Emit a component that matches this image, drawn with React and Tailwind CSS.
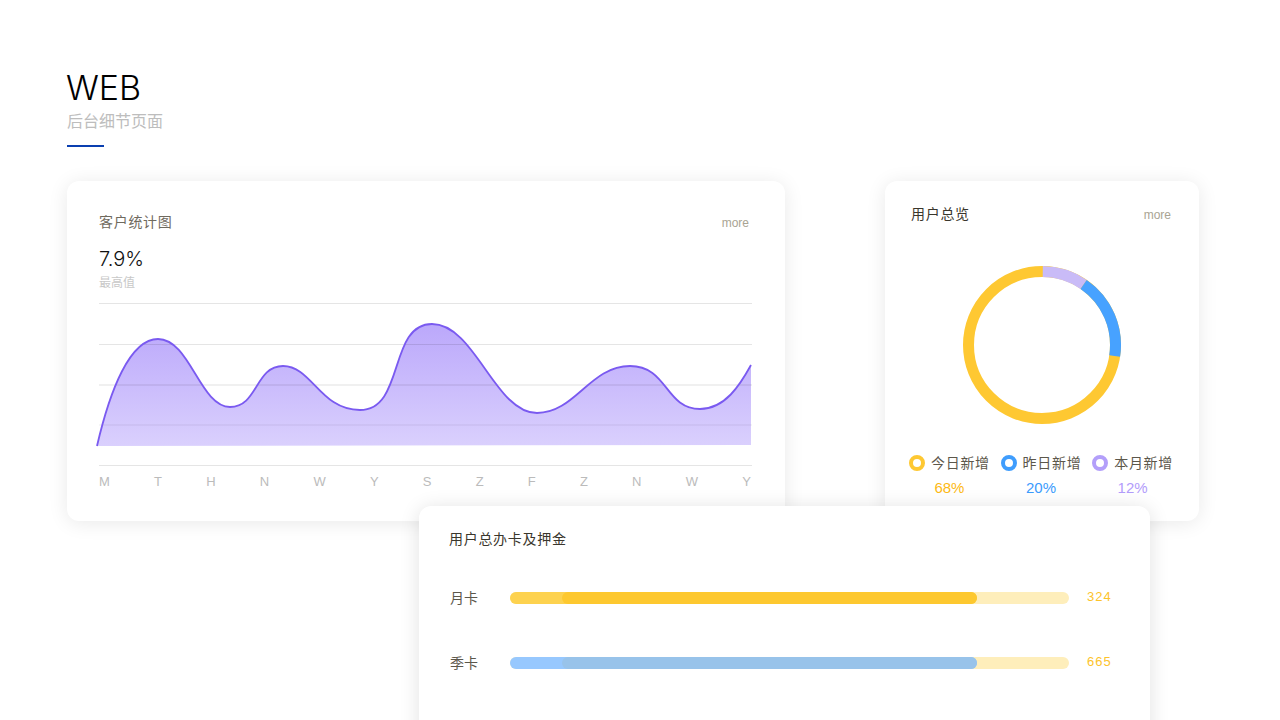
import React from 'react';

const CJK = "font-['Liberation_Sans','Noto_Sans_CJK_SC',sans-serif]";

const curve =
  'M97 446 C110 390 130 339 158 339 C190 339 200 407 230 407 C258 407 255 366 283 366 C312 366 320 410 360 410 C405 410 388 324 432 324 C475 324 495 413 537 413 C575 413 590 366 630 366 C668 366 665 409 700 409 C725 409 740 385 751 365';

const axis = ['M', 'T', 'H', 'N', 'W', 'Y', 'S', 'Z', 'F', 'Z', 'N', 'W', 'Y'];

const legend = [
  { name: '今日新增', value: '68%', dot: 'border-[#fec832]', text: 'text-[#fdb913]' },
  { name: '昨日新增', value: '20%', dot: 'border-[#3f9dfd]', text: 'text-[#3b9bfd]' },
  { name: '本月新增', value: '12%', dot: 'border-[#b39ffa]', text: 'text-[#b29cfb]' },
];

const bars = [
  { name: '月卡', value: '324', light: 'bg-[#fdd24f]', dark: 'bg-[#fdc82f]' },
  { name: '季卡', value: '665', light: 'bg-[#97c8fe]', dark: 'bg-[#98c3ea]' },
];

function arc(r, from, to) {
  const p = (a) => {
    const t = ((a - 90) * Math.PI) / 180;
    return `${80 + r * Math.cos(t)} ${80 + r * Math.sin(t)}`;
  };
  const large = to - from > 180 ? 1 : 0;
  return `M${p(from)} A${r} ${r} 0 ${large} 1 ${p(to)}`;
}

const LineChart = () => (
  <svg viewBox="99 303 653 163" className="block w-[653px] h-[163px] overflow-visible mt-3">
    <defs>
      <linearGradient id="area" x1="0" y1="0" x2="0" y2="1">
        <stop offset="0%" stopColor="#bba8fb" />
        <stop offset="100%" stopColor="#dad0fd" />
      </linearGradient>
    </defs>
    <path d={`${curve} L751 445 L97 446 Z`} fill="url(#area)" />
    <g stroke="#000" strokeOpacity="0.1">
      <line x1="99" x2="752" y1="303.5" y2="303.5" />
      <line x1="99" x2="752" y1="344.5" y2="344.5" />
      <line x1="99" x2="752" y1="385" y2="385" strokeWidth="2" strokeOpacity="0.06" />
      <line x1="99" x2="752" y1="425" y2="425" strokeOpacity="0.07" />
      <line x1="99" x2="752" y1="465.5" y2="465.5" />
    </g>
    <path d={curve} fill="none" stroke="#7a5af0" strokeWidth="1.8" />
  </svg>
);

const Donut = () => (
  <svg viewBox="0 0 160 160" className="block w-40 h-40 mx-auto mt-[41px]" fill="none" strokeWidth="11">
    <circle cx="80" cy="80" r="73.5" stroke="#fec832" />
    <path d={arc(73.5, 0.6, 34.5)} stroke="#c9bbf7" />
    <path d={arc(73.5, 34.5, 98.6)} stroke="#47a2ff" />
  </svg>
);

export default function App() {
  return (
    <div className={`w-full h-screen overflow-hidden bg-white pt-[68px] pl-[67px] ${CJK}`}>
      <h1 className="font-['Inter',sans-serif] font-light text-[34px] leading-10 text-black -ml-px">WEB</h1>
      <p className="text-base leading-6 text-[#bdbdbd] mt-0.5">后台细节页面</p>
      <div className="w-[37px] h-0.5 bg-[#0a3fb0] mt-[11px]"></div>

      <div className="flex mt-[34px]">
        <div className="w-[718px] h-[340px] rounded-xl bg-white shadow-[0_2px_20px_rgba(0,0,0,0.09)] pt-[31px] pl-8">
          <div className="flex justify-between items-center w-[650px]">
            <span className="text-sm leading-5 tracking-[0.7px] text-[#6f6a5e]">客户统计图</span>
            <span className="text-xs text-[#a9a493] mt-px">more</span>
          </div>
          <div className="font-['Inter',sans-serif] font-light text-xl leading-7 text-[#111] mt-[13px]">7.9%</div>
          <div className="text-xs leading-4 text-[#c8c8c8] mt-0.5">最高值</div>
          <LineChart />
          <div className="flex justify-between w-[652px] mt-2 text-[13px] leading-4 text-[#bbbbbb]">
            {axis.map((a, i) => (
              <span key={i}>{a}</span>
            ))}
          </div>
        </div>

        <div className="w-[314px] h-[340px] ml-[100px] rounded-xl bg-white shadow-[0_2px_20px_rgba(0,0,0,0.09)] pt-[23px]">
          <div className="flex justify-between items-center px-[26px] pr-7">
            <span className="text-sm leading-5 tracking-[0.7px] text-[#3a362c]">用户总览</span>
            <span className="text-xs text-[#a9a493] mt-px">more</span>
          </div>
          <Donut />
          <div className="flex justify-between w-[264px] ml-6 mt-7">
            {legend.map((item) => (
              <div key={item.name} className="text-center">
                <div className="flex items-center gap-[6px]">
                  <span className={`w-4 h-4 rounded-full bg-white border-4 ${item.dot}`}></span>
                  <span className="text-sm leading-5 tracking-[0.7px] text-[#5c574b]">{item.name}</span>
                </div>
                <div className={`text-[15px] leading-5 mt-[5px] ${item.text}`}>{item.value}</div>
              </div>
            ))}
          </div>
        </div>
      </div>

      <div className="relative w-[731px] h-[300px] ml-[352px] -mt-[15px] rounded-xl bg-white shadow-[0_2px_20px_rgba(0,0,0,0.12)] pt-[23px] pl-[30px]">
        <div className="text-sm leading-5 tracking-[0.7px] text-[#3a362c]">用户总办卡及押金</div>
        <div className="flex flex-col gap-[45px] mt-[39px]">
          {bars.map((bar) => (
            <div key={bar.name} className="flex items-center">
              <span className="w-[61px] pl-px text-sm leading-5 text-[#5c574b]">{bar.name}</span>
              <div className="w-[559px] h-3 rounded-full bg-[#feeebb]">
                <div className={`w-[467px] h-full rounded-full ${bar.light}`}>
                  <div className={`ml-[52px] w-[415px] h-full rounded-full ${bar.dark}`}></div>
                </div>
              </div>
              <span className="ml-[18px] text-[13px] leading-4 tracking-[1px] text-[#fdc32a] -mt-0.5">{bar.value}</span>
            </div>
          ))}
        </div>
      </div>
    </div>
  );
}
